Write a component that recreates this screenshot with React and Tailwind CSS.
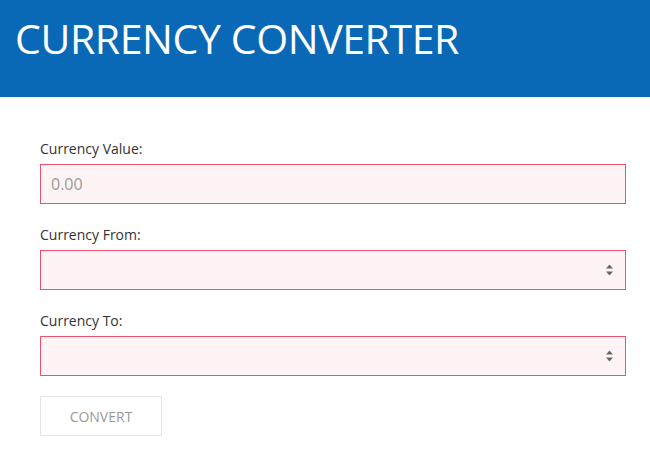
import React from "react";

function SelectArrow() {
  return (
    <svg className="pointer-events-none absolute right-[12px] top-1/2 -translate-y-1/2" width="7" height="11" viewBox="0 0 7 11">
      <polygon points="3.5,0 7,4 0,4" fill="#666" />
      <polygon points="0,7 7,7 3.5,11" fill="#666" />
    </svg>
  );
}

function Field({ label, children }) {
  return (
    <div className="flex flex-col">
      <label className="text-[14px] leading-[21px] text-[#333] mb-[5px]">{label}</label>
      {children}
    </div>
  );
}

export default function App() {
  return (
    <div className="w-[650px] h-[456px] bg-white" style={{ fontFamily: '"Open Sans", "Noto Sans", sans-serif' }}>
      <header className="h-[97px] bg-[#0a69b6] pl-[15px] pt-[14px]">
        <h1 className="text-white text-[41px] leading-[48px] font-normal tracking-[-0.4px]">CURRENCY CONVERTER</h1>
      </header>
      <div className="pl-[40px] pr-[24px] pt-[41px] flex flex-col gap-[20px]">
        <Field label="Currency Value:">
          <input
            placeholder="0.00"
            className="h-[40px] px-[10px] border border-[#f0506e] bg-[#fef4f6] text-[16px] text-[#f0506e] placeholder:text-[#999] outline-none"
          />
        </Field>
        <Field label="Currency From:">
          <div className="relative h-[40px] border border-[#f0506e] bg-[#fef4f6]">
            <SelectArrow />
          </div>
        </Field>
        <Field label="Currency To:">
          <div className="relative h-[40px] border border-[#f0506e] bg-[#fef4f6]">
            <SelectArrow />
          </div>
        </Field>
        <div>
          <button className="h-[40px] w-[122px] border border-[#e5e5e5] bg-white text-[14px] text-[#999] uppercase">
            Convert
          </button>
        </div>
      </div>
    </div>
  );
}
